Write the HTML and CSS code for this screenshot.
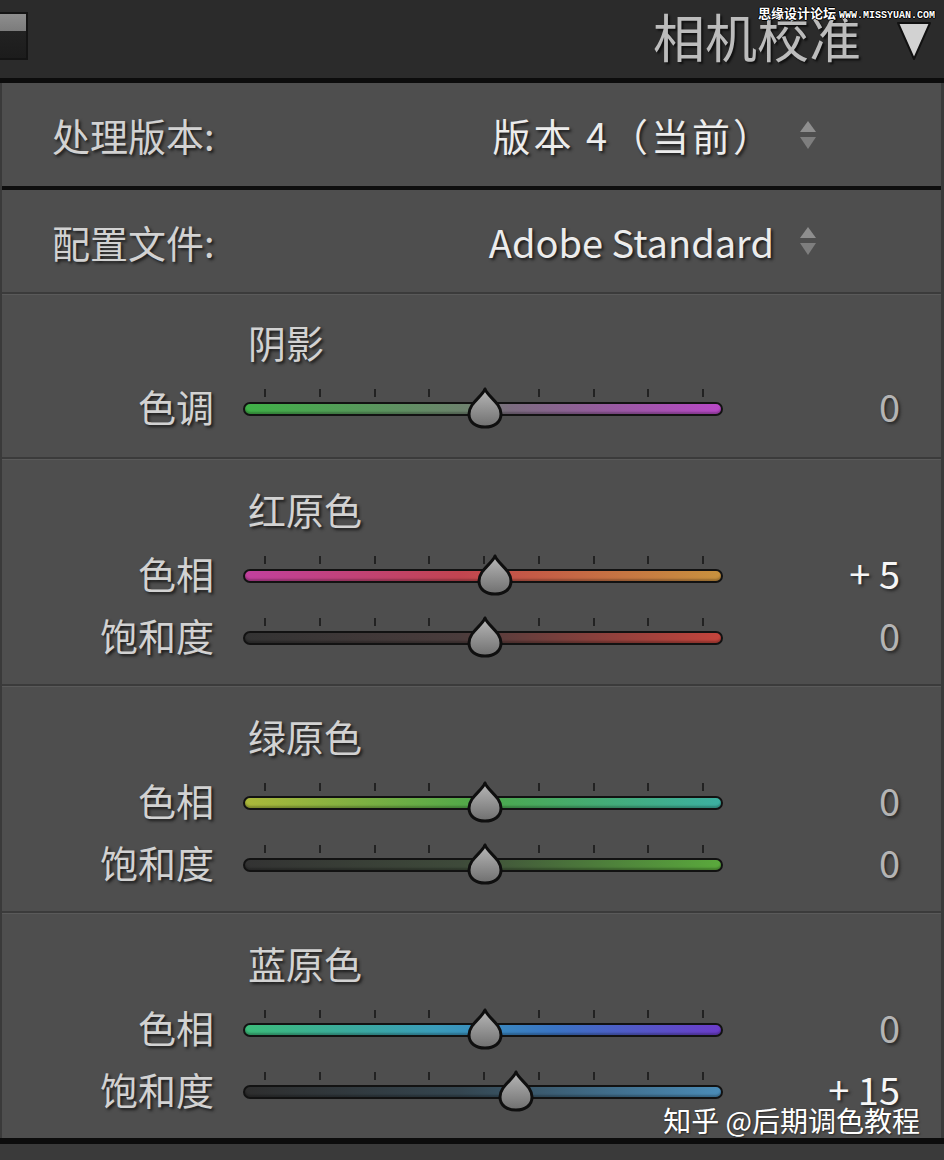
FILE: index.html
```html
<!DOCTYPE html>
<html>
	<head>
		<meta charset="utf-8">
		<title>相机校准</title>
		<link rel="stylesheet" href="styles.css">
	</head>
	<body>
		<svg class="defs" width="0" height="0">
			<defs>
				<linearGradient id="dg" x1="0" y1="0" x2="0" y2="1">
					<stop offset="0" stop-color="#b8b8b8"/>
					<stop offset="1" stop-color="#6f6f6f"/>
				</linearGradient>
				<symbol id="drop" viewBox="0 0 36 42">
					<path d="M18 2 C21 10 34 16 34 27 C34 35.5 27 40 18 40 C9 40 2 35.5 2 27 C2 16 15 10 18 2 Z" fill="url(#dg)" stroke="#0f0f0f" stroke-width="3" stroke-linejoin="round"/>
				</symbol>
				<symbol id="updown" viewBox="0 0 18 30">
					<polygon points="9,1 17,12 1,12" fill="#8e8e8e"/>
					<polygon points="1,17 17,17 9,29" fill="#7e7e7e"/>
				</symbol>
			</defs>
		</svg>
		<div class="panel">
			<div class="head">
				<span class="solo"></span>
				<div class="head-r">
					<h1>相机校准</h1>
					<svg class="tri" viewBox="0 0 36 40"><polygon points="2,2 34,2 18,38" fill="#d2d2d2" stroke="#111" stroke-width="2" stroke-linejoin="round"/></svg>
				</div>
				<span class="wm-top">思缘设计论坛 <i>WWW.MISSYUAN.COM</i></span>
			</div>
			<div class="body">
				<div class="opt">
					<span class="lbl">处理版本:</span>
					<span class="val val-cn">版本 4（当前）</span>
					<svg class="spin"><use href="#updown"/></svg>
				</div>
				<div class="opt opt2">
					<span class="lbl">配置文件:</span>
					<span class="val">Adobe Standard</span>
					<svg class="spin"><use href="#updown"/></svg>
				</div>

				<!-- 阴影 -->
				<div class="sec sec-first">
					<div class="sec-title">阴影</div>
					<div class="srow">
						<span class="slbl">色调</span>
						<div class="slider">
							<div class="ticks"><i></i><i></i><i></i><i></i><i></i><i></i><i></i><i></i><i></i></div>
							<div class="track t-shadow"></div>
							<svg class="thumb" style="left:50.4%"><use href="#drop"/></svg>
						</div>
						<span class="num">0</span>
					</div>
				</div>

				<!-- 红原色 -->
				<div class="sec">
					<div class="sec-title">红原色</div>
					<div class="srow">
						<span class="slbl">色相</span>
						<div class="slider">
							<div class="ticks"><i></i><i></i><i></i><i></i><i></i><i></i><i></i><i></i><i></i></div>
							<div class="track t-red-hue"></div>
							<svg class="thumb" style="left:52.5%"><use href="#drop"/></svg>
						</div>
						<span class="num on">+ 5</span>
					</div>
					<div class="srow">
						<span class="slbl">饱和度</span>
						<div class="slider">
							<div class="ticks"><i></i><i></i><i></i><i></i><i></i><i></i><i></i><i></i><i></i></div>
							<div class="track t-red-sat"></div>
							<svg class="thumb" style="left:50.4%"><use href="#drop"/></svg>
						</div>
						<span class="num">0</span>
					</div>
				</div>

				<!-- 绿原色 -->
				<div class="sec">
					<div class="sec-title">绿原色</div>
					<div class="srow">
						<span class="slbl">色相</span>
						<div class="slider">
							<div class="ticks"><i></i><i></i><i></i><i></i><i></i><i></i><i></i><i></i><i></i></div>
							<div class="track t-green-hue"></div>
							<svg class="thumb" style="left:50.4%"><use href="#drop"/></svg>
						</div>
						<span class="num">0</span>
					</div>
					<div class="srow">
						<span class="slbl">饱和度</span>
						<div class="slider">
							<div class="ticks"><i></i><i></i><i></i><i></i><i></i><i></i><i></i><i></i><i></i></div>
							<div class="track t-green-sat"></div>
							<svg class="thumb" style="left:50.4%"><use href="#drop"/></svg>
						</div>
						<span class="num">0</span>
					</div>
				</div>

				<!-- 蓝原色 -->
				<div class="sec">
					<div class="sec-title">蓝原色</div>
					<div class="srow">
						<span class="slbl">色相</span>
						<div class="slider">
							<div class="ticks"><i></i><i></i><i></i><i></i><i></i><i></i><i></i><i></i><i></i></div>
							<div class="track t-blue-hue"></div>
							<svg class="thumb" style="left:50.4%"><use href="#drop"/></svg>
						</div>
						<span class="num">0</span>
					</div>
					<div class="srow">
						<span class="slbl">饱和度</span>
						<div class="slider">
							<div class="ticks"><i></i><i></i><i></i><i></i><i></i><i></i><i></i><i></i><i></i></div>
							<div class="track t-blue-sat"></div>
							<svg class="thumb" style="left:56.9%"><use href="#drop"/></svg>
						</div>
						<span class="num on">+ 15</span>
					</div>
				</div>
			</div>
			<div class="foot"></div>
			<div class="wm">知乎 @后期调色教程</div>
		</div>
	</body>
</html>
```

FILE: styles.css
```css
*{margin:0;padding:0;box-sizing:border-box;}
body{width:944px;height:1160px;overflow:hidden;background:#383838;font-family:"Noto Sans CJK SC","Noto Sans",sans-serif;}
.defs{position:absolute;width:0;height:0;}
.panel{position:relative;width:944px;height:1160px;}

/* 顶部标题栏 */
.head{position:relative;height:83px;background:#2b2b2b;border-bottom:5px solid #0c0c0c;display:flex;justify-content:space-between;align-items:flex-start;}
.solo{width:28px;height:48px;margin-top:12px;border:2px solid #141414;border-left:0;background:linear-gradient(#8e8e8e 0,#7c7c7c 38%,#222 38%,#1c1c1c 100%);}
.head-r{height:78px;display:flex;align-items:center;padding-right:12px;}
.head h1{font-size:52px;font-weight:400;line-height:1;color:#bcbcbc;margin-right:35px;margin-bottom:6px;text-shadow:2px 2px 2px #111;}
.tri{width:36px;height:40px;margin-top:4px;}
.wm-top{position:absolute;top:5px;right:9px;font-size:13px;line-height:15px;font-weight:700;color:#fff;text-shadow:1px 0 #000,-1px 0 #000,0 1px #000,0 -1px #000;}
.wm-top i{font-style:normal;font-family:"Liberation Mono",monospace;font-size:10px;}

.body{background:#4e4e4e;border-left:2px solid #3a3a3a;border-right:3px solid #3a3a3a;}

/* 处理版本 / 配置文件 */
.opt{height:107px;display:flex;align-items:center;padding:0 124px 0 50px;border-bottom:4px solid #0e0e0e;}
.opt2{height:102px;border-bottom:0;}
.lbl{font-size:38px;color:#d2d2d2;text-shadow:2px 2px 3px #1a1a1a;}
.val{margin-left:auto;font-size:38px;color:#ececec;text-shadow:2px 2px 3px #1a1a1a;}
.val-cn{letter-spacing:3px;}
.spin{width:18px;height:30px;margin-left:25px;}

/* 分组 */
.sec{border-top:2px solid #3b3b3b;box-shadow:inset 0 1px 0 #5a5a5a;padding:19px 0 16px;}
.sec-first{padding:17px 0 18px;}
.sec-title{height:66px;line-height:62px;padding-left:246px;font-size:38px;color:#d2d2d2;text-shadow:2px 2px 3px #1a1a1a;}
.srow{height:62px;display:grid;grid-template-columns:212px 480px 1fr;column-gap:29px;align-items:center;padding-right:41px;}
.slbl{text-align:right;font-size:38px;line-height:1;margin-bottom:5px;color:#d2d2d2;text-shadow:2px 2px 3px #1a1a1a;}
.num{text-align:right;font-size:38px;line-height:1;margin-bottom:5px;color:#b4b4b4;text-shadow:2px 2px 3px #262626;}
.num.on{color:#f6f6f6;}

/* 滑块 */
.slider{position:relative;height:40px;}
.ticks{height:9px;display:flex;justify-content:space-between;padding:0 19px 0 21px;}
.ticks i{width:2px;height:8px;margin-top:1px;background:#222;}
.track{height:14px;margin-top:5px;border:2px solid #121212;border-radius:7px;box-shadow:inset 0 -2px 2px rgba(0,0,0,.25);}
.thumb{position:absolute;top:-1px;width:36px;height:42px;transform:translateX(-50%);}

.t-shadow{background:linear-gradient(90deg,#3fb247,#6f806f 48%,#7c6c80 56%,#b848c6);}
.t-red-hue{background:linear-gradient(90deg,#c2409e,#c24450 45%,#c45a46 60%,#c8923e);}
.t-red-sat{background:linear-gradient(90deg,#333,#4a3c3c 45%,#c4443c);}
.t-green-hue{background:linear-gradient(90deg,#acb83a,#4ca84a 50%,#3cb0a2);}
.t-green-sat{background:linear-gradient(90deg,#333,#3e4a3a 45%,#5aaa3c);}
.t-blue-hue{background:linear-gradient(90deg,#3cbc7a,#3a9cba 40%,#3a74c4 65%,#6c3cca);}
.t-blue-sat{background:linear-gradient(90deg,#2e2e2e,#34454f 45%,#4a8cb8);}

/* 底部 */
.foot{height:22px;border-top:6px solid #0c0c0c;background:#3a3a3a;}
.wm{position:absolute;right:24px;top:1098px;font-size:28px;line-height:44px;color:#fff;text-shadow:1px 1px 2px rgba(0,0,0,.5);}
```
